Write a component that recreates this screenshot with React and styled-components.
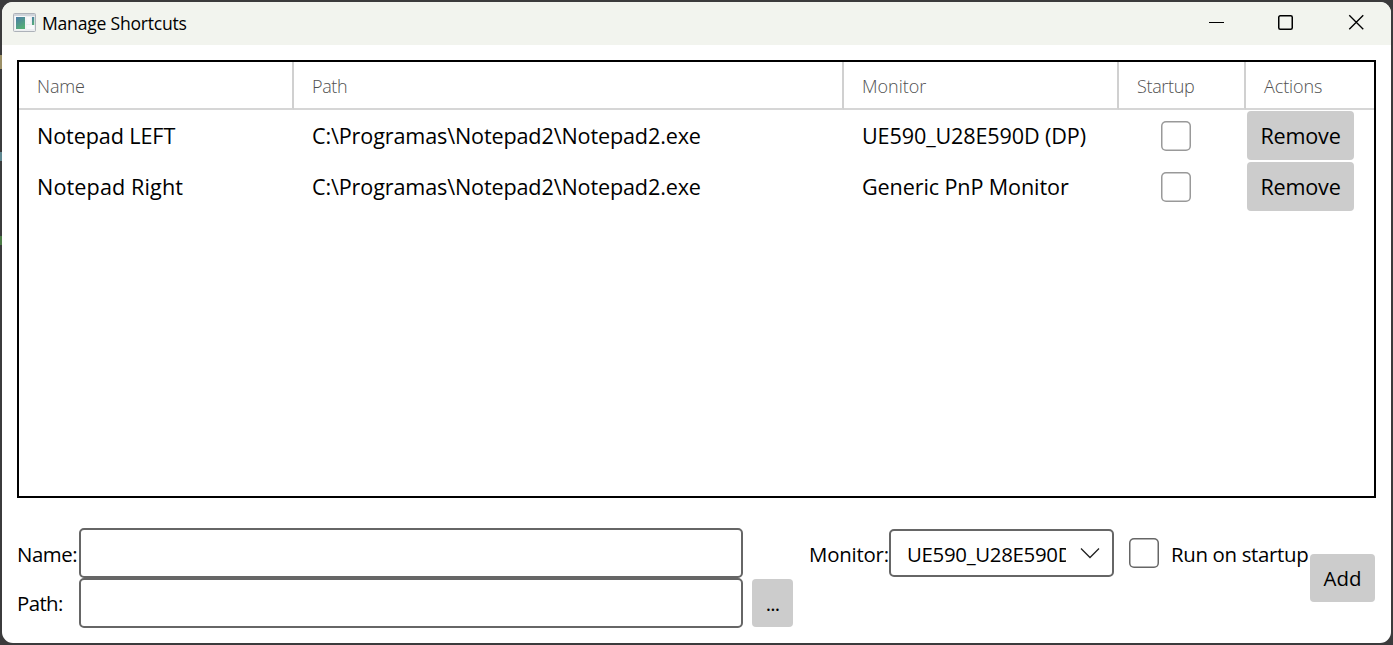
import React from "react";
import styled, { createGlobalStyle } from "styled-components";

const GlobalStyle = createGlobalStyle`
  * { box-sizing: border-box; }
  body { margin: 0; background: #3b3b3c; }
`;

const Desktop = styled.div`
  width: 1393px;
  height: 645px;
  padding: 2px;
  background:
    linear-gradient(#9b8f66, #9b8f66) 0 55px / 2px 14px no-repeat,
    linear-gradient(#5f8790, #5f8790) 0 152px / 2px 9px no-repeat,
    linear-gradient(#4b7a45, #4b7a45) 0 236px / 2px 9px no-repeat,
    #3b3b3c;
  overflow: hidden;
`;

const Window = styled.main`
  display: flex;
  flex-direction: column;
  width: 1389px;
  height: 641px;
  border-radius: 11px;
  background: #fff;
  color: #000;
  font-family: "Open Sans", "Noto Sans", sans-serif;
  font-weight: 400;
  overflow: hidden;
`;

const TitleBar = styled.header`
  display: flex;
  align-items: center;
  flex: none;
  height: 43px;
  padding: 0 27px 3px 11px;
  background: #f2f4ee;
`;

const Title = styled.h1`
  flex: 1;
  margin: 0 0 0 6px;
  padding-top: 1px;
  font-size: 17.6px;
  line-height: 24px;
  font-weight: inherit;
  letter-spacing: ${(p) => p.$track}px;
`;

const Controls = styled.div`
  display: flex;
  align-items: center;
  gap: 54px;
  svg { display: block; }
`;

const Content = styled.div`
  display: flex;
  flex-direction: column;
  padding: 15px 15px 0;
`;

const Table = styled.section`
  height: 438px;
  border: 2px solid #000;
`;

const GridRow = styled.div`
  display: grid;
  grid-template-columns: 275px 550px 275px 127px 128px;
  height: ${(p) => (p.$head ? 48 : 51)}px;
`;

const HeadCell = styled.div`
  padding: 0 0 0 18px;
  border-bottom: 2px solid #d6d6d6;
  border-right: ${(p) => (p.$last ? 0 : 2)}px solid #d0d0d0;
  color: #505050;
  font-size: 18px;
  font-weight: 300;
  line-height: 49px;
  letter-spacing: ${(p) => p.$track}px;
  height: 48px;
`;

const Cell = styled.div`
  padding-left: 18px;
  font-size: 21.6px;
  line-height: 52px;
  letter-spacing: ${(p) => p.$track || 0}px;
  white-space: nowrap;
`;

const CheckCell = styled.div`
  display: flex;
  align-items: center;
  padding-left: 42px;
`;

const ActionCell = styled.div`
  display: flex;
  align-items: flex-start;
  padding: 1px 0 0 1px;
`;

const CheckBox = styled.span`
  flex: none;
  width: 30px;
  height: 30px;
  border-radius: 5px;
  background: #fff;
  box-shadow: inset 0 0 0 1.5px ${(p) => (p.$strong ? "#666" : "#999")};
`;

const Button = styled.button`
  flex: none;
  width: ${(p) => p.$w}px;
  height: ${(p) => p.$h || 48}px;
  margin: 0;
  padding: 0;
  border: 0;
  border-radius: 4px;
  background: #ccc;
  color: #000;
  font-family: inherit;
  font-weight: inherit;
  font-size: ${(p) => p.$size || 20.4}px;
  line-height: 30px;
  letter-spacing: ${(p) => p.$track || 0}px;
`;

const Form = styled.form`
  display: flex;
  align-items: flex-start;
  height: 100px;
  margin-top: 30px;
`;

const Fields = styled.div`
  display: grid;
  grid-template-columns: 62px 664px 41px;
  grid-auto-rows: 50px;
  align-items: center;
  width: 776px;
`;

const Browse = styled.div`
  padding-left: 9px;
  display: flex;
`;

const Label = styled.label`
  flex: none;
  width: ${(p) => p.$w}px;
  padding-top: ${(p) => (p.$flush ? 0 : 2)}px;
  font-size: 20.4px;
  line-height: 30px;
  letter-spacing: ${(p) => p.$track || 0}px;
  white-space: nowrap;
`;

const Input = styled.input`
  width: 664px;
  height: 50px;
  padding: 0 12px;
  border: 2px solid #666;
  border-radius: 5px;
  background: #fff;
  font: inherit;
  font-size: 20px;
  outline: 0;
`;

const MonitorField = styled.div`
  display: flex;
  align-items: center;
  height: 50px;
  margin-left: 16px;
`;

const Select = styled.div`
  display: flex;
  align-items: center;
  flex: none;
  width: 225px;
  height: 48px;
  padding: 0 11px 0 16px;
  border: 2px solid #666;
  border-radius: 5px;
`;

const SelectValue = styled.span`
  flex: none;
  width: 159px;
  margin-right: 14px;
  padding-top: 1px;
  overflow: hidden;
  font-size: 20.4px;
  line-height: 30px;
  letter-spacing: ${(p) => p.$track}px;
  white-space: nowrap;
`;

const StartupField = styled.div`
  display: flex;
  align-items: center;
  gap: 12px;
  height: 50px;
  margin-left: 15px;
`;

const AddSlot = styled.div`
  display: flex;
  align-items: center;
  height: 100px;
`;

function AppIcon() {
  return (
    <svg width="23" height="19" viewBox="0 0 23 19">
      <defs>
        <linearGradient id="pane" x1="0" y1="0" x2="0.5" y2="1">
          <stop offset="0" stopColor="#4b7ca8" />
          <stop offset="1" stopColor="#55ad78" />
        </linearGradient>
      </defs>
      <rect x="0.5" y="0.5" width="22" height="18" rx="1" fill="#eceef0" stroke="#adb2b9" />
      <rect x="1" y="1" width="21" height="2" fill="#cfd4da" />
      <rect x="2" y="3" width="10.5" height="13.5" fill="#f8f9fa" />
      <rect x="3" y="4" width="9" height="12" fill="url(#pane)" />
      <rect x="13.5" y="4" width="4" height="7" fill="#f8f9fa" />
      <rect x="13.5" y="12" width="7.5" height="4" fill="#f8f9fa" />
      <rect x="19" y="4" width="2.2" height="8" fill="url(#pane)" />
    </svg>
  );
}

const columns = [
  ["Name", -0.1],
  ["Path", -0.4],
  ["Monitor", 0],
  ["Startup", -0.35],
  ["Actions", -0.1],
];

const rows = [
  { name: "Notepad LEFT", nameTrack: -0.1, monitor: "UE590_U28E590D (DP)", monitorTrack: -0.13 },
  { name: "Notepad Right", nameTrack: 0.12, monitor: "Generic PnP Monitor", monitorTrack: -0.12 },
];

export default function App() {
  return (
    <Desktop>
      <GlobalStyle />
      <Window>
        <TitleBar>
          <AppIcon />
          <Title $track={-0.24}>Manage Shortcuts</Title>
          <Controls>
            <svg width="15" height="16" viewBox="0 0 15 16">
              <path d="M0 8.5H15" stroke="#000" />
            </svg>
            <svg width="16" height="16" viewBox="0 0 16 16">
              <rect x="0.75" y="1.75" width="13.5" height="13.5" rx="1.5" fill="none" stroke="#000" strokeWidth="1.5" />
            </svg>
            <svg width="16" height="16" viewBox="0 0 16 16">
              <path d="M1.25 1.25L15.25 15.25M15.25 1.25L1.25 15.25" stroke="#000" strokeWidth="1.4" />
            </svg>
          </Controls>
        </TitleBar>
        <Content>
          <Table>
            <GridRow $head>
              {columns.map(([text, track], i) => (
                <HeadCell key={text} $track={track} $last={i === 4}>{text}</HeadCell>
              ))}
            </GridRow>
            {rows.map((row) => (
              <GridRow key={row.name}>
                <Cell $track={row.nameTrack}>{row.name}</Cell>
                <Cell $track={-0.14}>C:\Programas\Notepad2\Notepad2.exe</Cell>
                <Cell $track={row.monitorTrack}>{row.monitor}</Cell>
                <CheckCell><CheckBox /></CheckCell>
                <ActionCell><Button $w={107} $h={49} $size={21.6} $track={-0.2}>Remove</Button></ActionCell>
              </GridRow>
            ))}
          </Table>
          <Form>
            <Fields>
              <Label $track={-0.45}>Name:</Label>
              <Input />
              <span />
              <Label $track={-0.6} $flush>Path:</Label>
              <Input />
              <Browse><Button type="button" $w={41} $track={-0.8}>...</Button></Browse>
            </Fields>
            <MonitorField>
              <Label $w={80} $track={-0.2}>Monitor:</Label>
              <Select>
                <SelectValue $track={-0.3}>UE590_U28E590D (DP)</SelectValue>
                <svg width="20" height="12" viewBox="0 0 20 12">
                  <path d="M1 1.5L10 10.5L19 1.5" fill="none" stroke="#222" strokeWidth="1.3" />
                </svg>
              </Select>
            </MonitorField>
            <StartupField>
              <CheckBox $strong />
              <Label $w={139} $track={-0.32}>Run on startup</Label>
            </StartupField>
            <AddSlot><Button type="button" $w={65}>Add</Button></AddSlot>
          </Form>
        </Content>
      </Window>
    </Desktop>
  );
}
